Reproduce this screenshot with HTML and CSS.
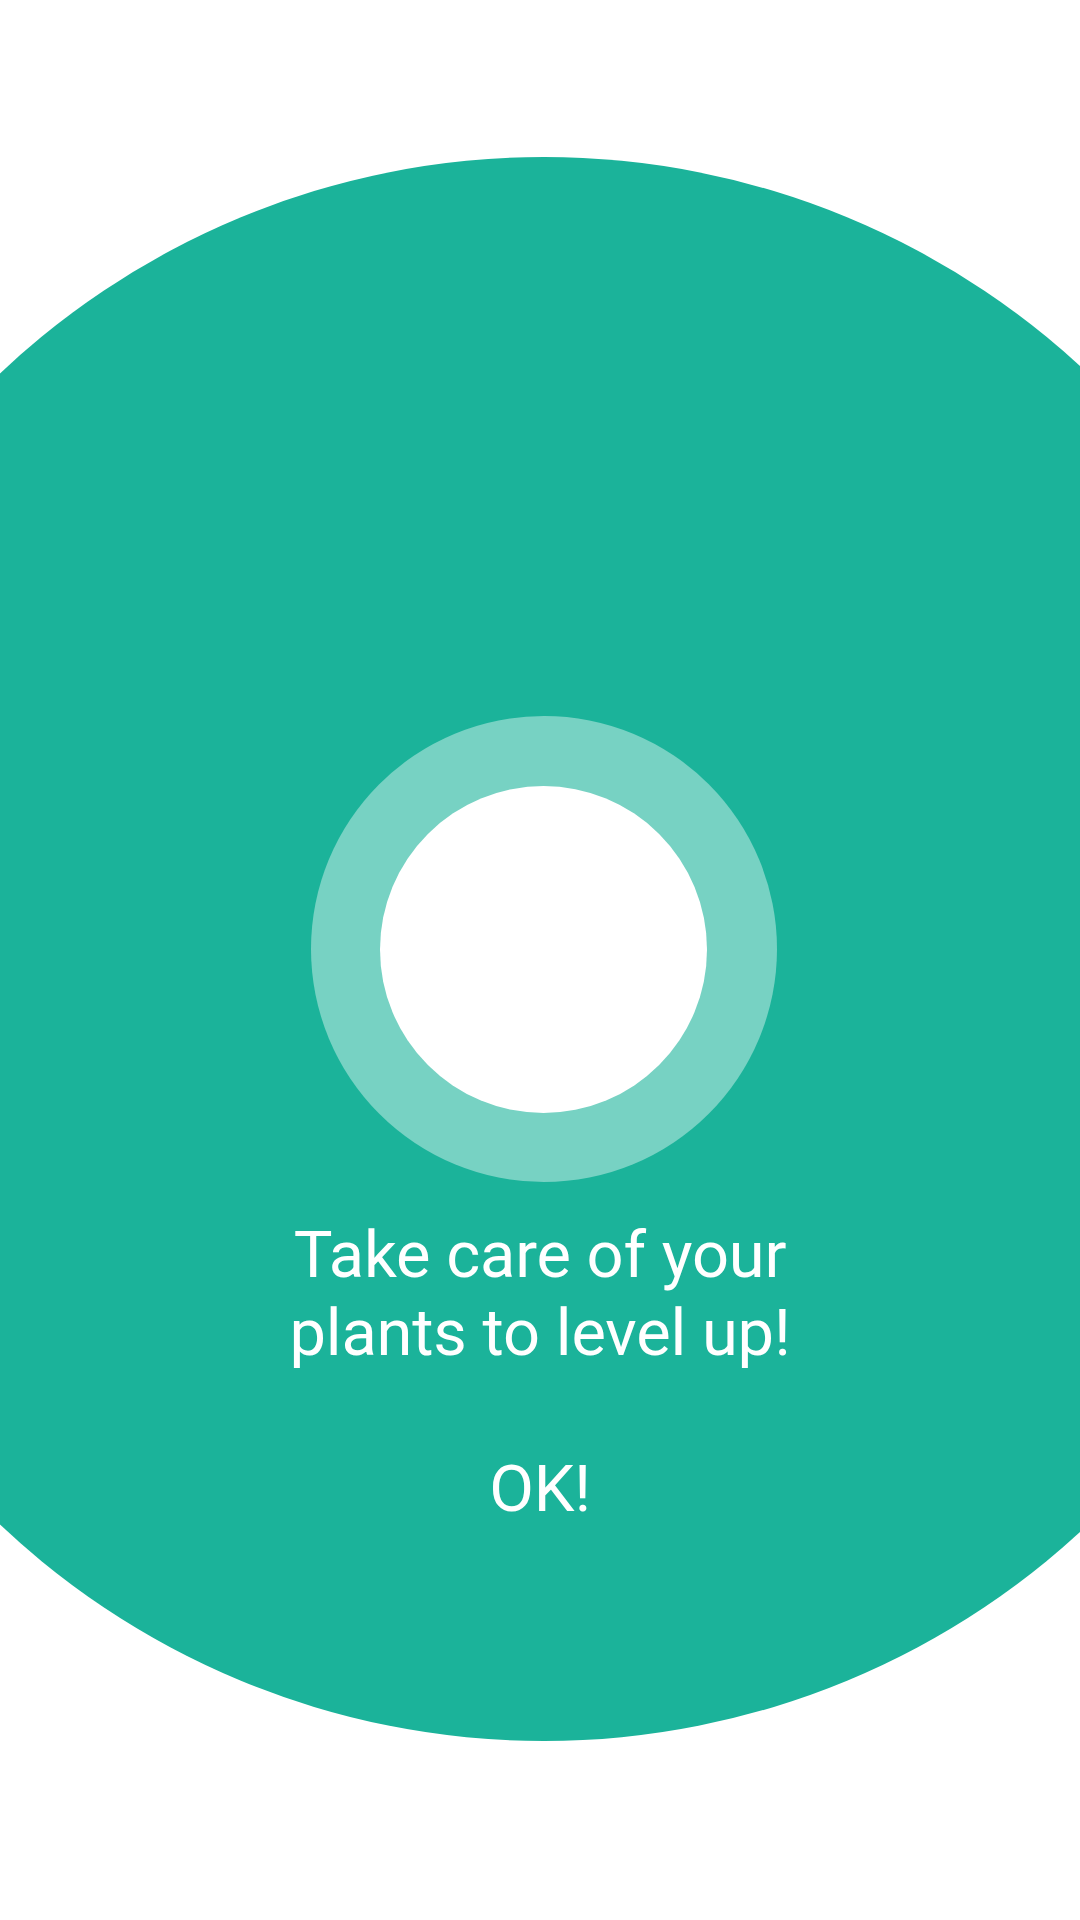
FILE: index.html
```html
<!DOCTYPE html>
<html lang="en">
<head>
<meta charset="utf-8">
<title>Level up</title>
<link rel="stylesheet" href="styles.css">
</head>
<body>
<main class="screen">
  <section class="spotlight">
    <div class="ring">
      <div class="ring-core"></div>
    </div>
    <div class="message">
      <p class="message-text">Take care of your<br>plants to level up!</p>
      <button class="ok-button" type="button">OK!</button>
    </div>
  </section>
</main>
</body>
</html>
```

FILE: styles.css
```css
html, body {
  margin: 0;
  padding: 0;
  background: #ffffff;
}

.screen {
  width: 1080px;
  height: 1920px;
  overflow: hidden;
  display: flex;
  justify-content: center;
  align-items: flex-start;
  padding-top: 157px;
  box-sizing: border-box;
  font-family: Roboto, "Noto Sans", sans-serif;
}

.spotlight {
  flex: 0 0 1584px;
  width: 1584px;
  height: 1584px;
  margin-left: 7px;
  border-radius: 50%;
  background: #1bb39a;
  display: flex;
  flex-direction: column;
  align-items: center;
}

.ring {
  margin-top: 559px;
  width: 466px;
  height: 466px;
  border-radius: 50%;
  background: #77d2c3;
  display: flex;
  align-items: center;
  justify-content: center;
}

.ring-core {
  width: 327px;
  height: 327px;
  border-radius: 50%;
  background: #ffffff;
}

.message {
  margin-top: 34px;
  margin-right: 7px;
  display: flex;
  flex-direction: column;
  align-items: center;
  color: #ffffff;
}

.message-text {
  margin: 0;
  font-size: 65px;
  line-height: 78px;
  font-weight: 400;
  letter-spacing: -0.2px;
  text-align: center;
}

.ok-button {
  margin-top: 78px;
  padding: 0;
  border: none;
  background: none;
  color: #ffffff;
  font-family: Roboto, "Noto Sans", sans-serif;
  font-size: 65px;
  line-height: 78px;
  font-weight: 400;
  letter-spacing: -0.2px;
  cursor: pointer;
}
```
